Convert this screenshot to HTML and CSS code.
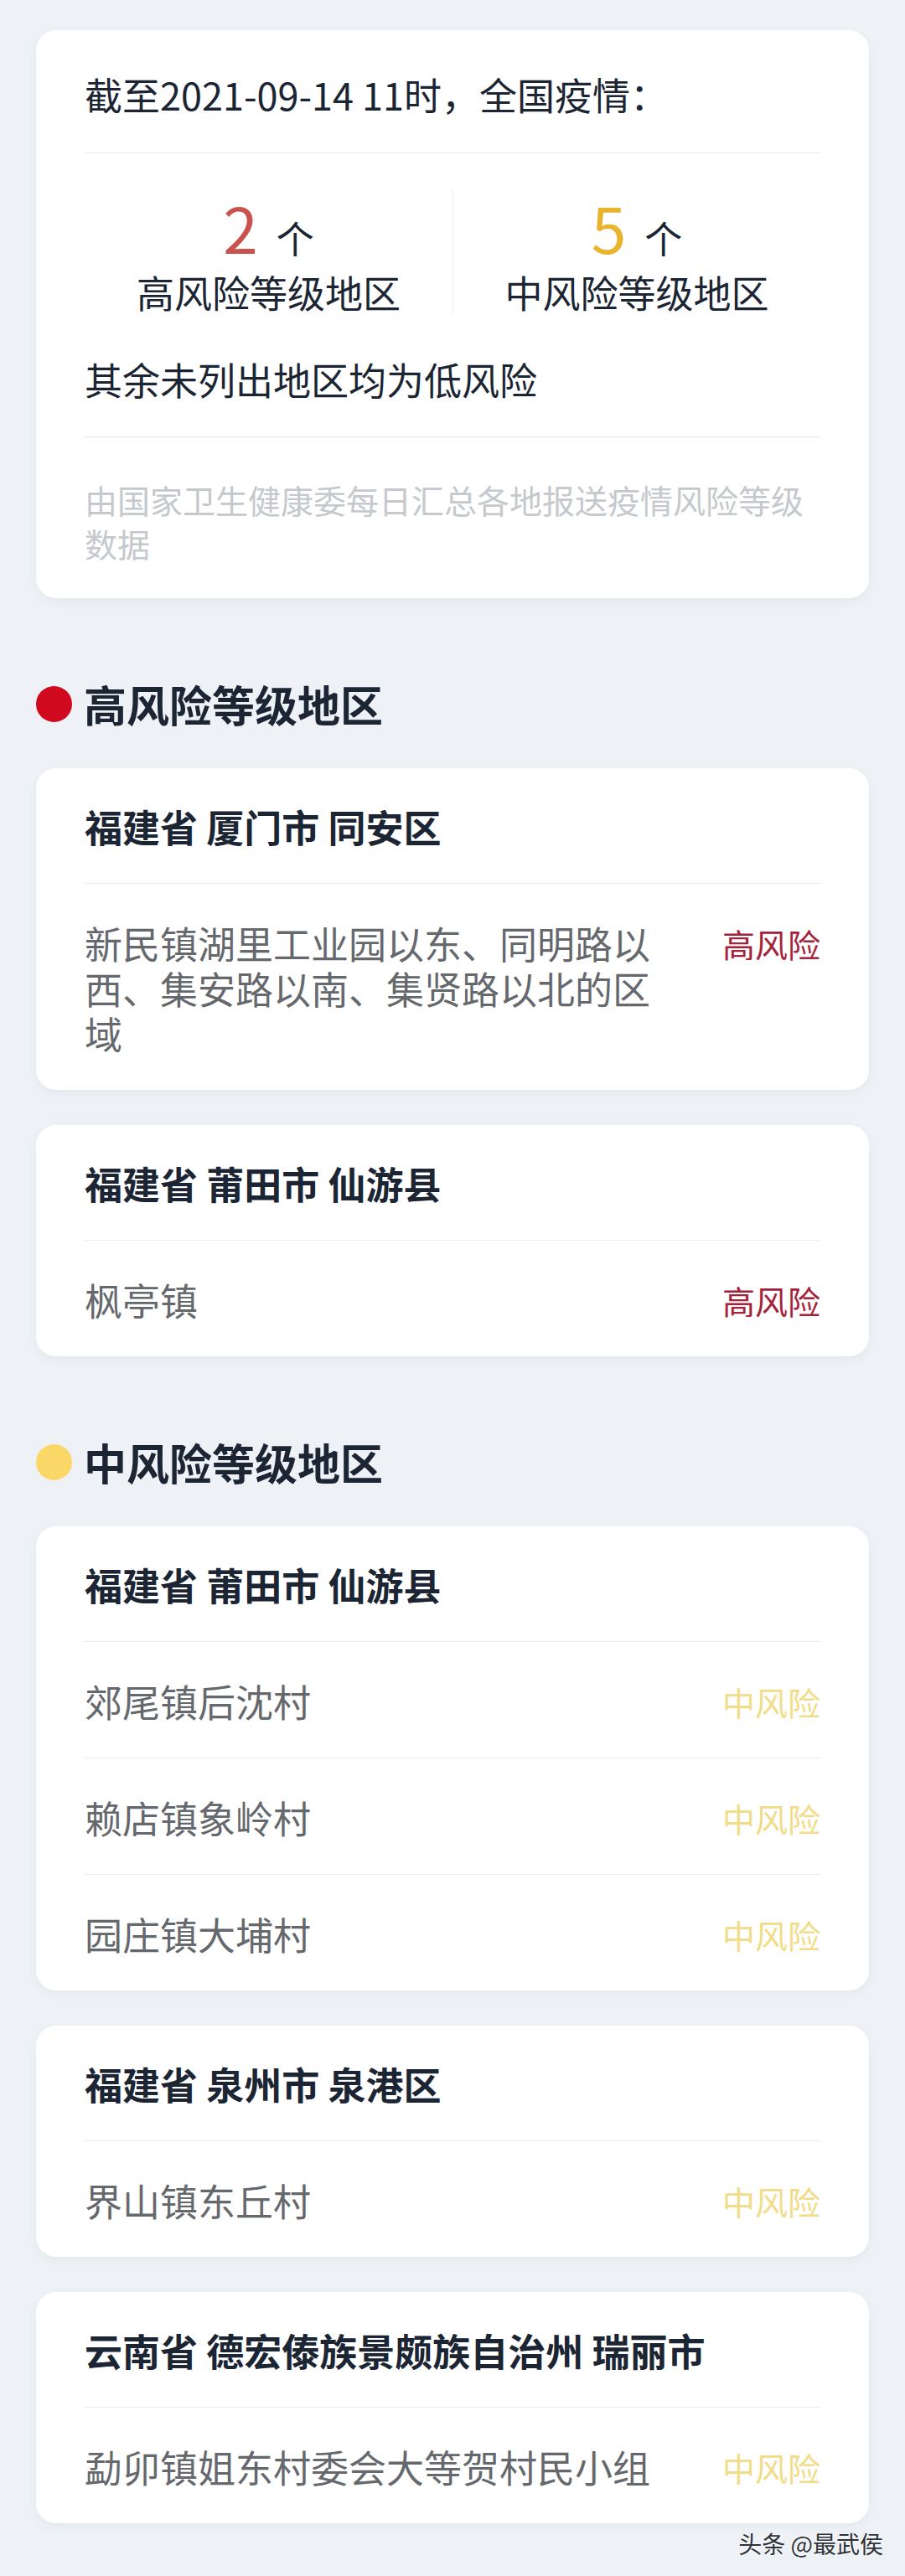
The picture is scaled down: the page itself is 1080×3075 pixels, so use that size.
FILE: index.html
```html
<!DOCTYPE html>
<html lang="zh-CN">
<head>
<meta charset="utf-8">
<title>全国疫情风险等级</title>
<link rel="stylesheet" href="styles.css">
</head>
<body>
<div class="page">
  <section class="card summary">
    <div class="summary-title">截至2021-09-14 11时，全国疫情：</div>
    <div class="stats">
      <div class="stat">
        <div class="stat-num"><span class="num num-high">2</span><span class="unit">个</span></div>
        <div class="stat-label">高风险等级地区</div>
      </div>
      <div class="stat stat-right">
        <div class="stat-num"><span class="num num-mid">5</span><span class="unit">个</span></div>
        <div class="stat-label">中风险等级地区</div>
      </div>
    </div>
    <div class="summary-low">其余未列出地区均为低风险</div>
    <div class="summary-note">由国家卫生健康委每日汇总各地报送疫情风险等级数据</div>
  </section>

  <h2 class="section-title"><span class="dot dot-high"></span>高风险等级地区</h2>

  <section class="card">
    <div class="card-head">福建省 厦门市 同安区</div>
    <div class="row">
      <div class="row-text">新民镇湖里工业园以东、同明路以西、集安路以南、集贤路以北的区域</div>
      <div class="tag tag-high">高风险</div>
    </div>
  </section>

  <section class="card">
    <div class="card-head">福建省 莆田市 仙游县</div>
    <div class="row">
      <div class="row-text">枫亭镇</div>
      <div class="tag tag-high">高风险</div>
    </div>
  </section>

  <h2 class="section-title"><span class="dot dot-mid"></span>中风险等级地区</h2>

  <section class="card">
    <div class="card-head">福建省 莆田市 仙游县</div>
    <div class="row">
      <div class="row-text">郊尾镇后沈村</div>
      <div class="tag tag-mid">中风险</div>
    </div>
    <div class="row">
      <div class="row-text">赖店镇象岭村</div>
      <div class="tag tag-mid">中风险</div>
    </div>
    <div class="row">
      <div class="row-text">园庄镇大埔村</div>
      <div class="tag tag-mid">中风险</div>
    </div>
  </section>

  <section class="card">
    <div class="card-head">福建省 泉州市 泉港区</div>
    <div class="row">
      <div class="row-text">界山镇东丘村</div>
      <div class="tag tag-mid">中风险</div>
    </div>
  </section>

  <section class="card">
    <div class="card-head">云南省 德宏傣族景颇族自治州 瑞丽市</div>
    <div class="row">
      <div class="row-text">勐卯镇姐东村委会大等贺村民小组</div>
      <div class="tag tag-mid">中风险</div>
    </div>
  </section>

  <div class="watermark">头条 @最武侯</div>
</div>
</body>
</html>
```

FILE: styles.css
```css
* {
  box-sizing: border-box;
}

html, body {
  margin: 0;
  padding: 0;
}

body {
  background: #eef2f6;
  font-family: "Noto Sans CJK SC", "Noto Sans", sans-serif;
  color: #1b2533;
}

.page {
  position: relative;
  width: 1080px;
  min-height: 3075px;
  padding: 36px 43px 63px;
  display: flex;
  flex-direction: column;
}

.card {
  background: #ffffff;
  border-radius: 24px;
  padding: 0 58px;
  box-shadow: 0 4px 12px rgba(40, 60, 90, 0.05);
  margin-bottom: 42px;
}

/* summary card */
.summary-title {
  font-size: 45px;
  line-height: 54px;
  padding: 50px 0 42px;
  border-bottom: 1px solid #e8eaed;
  color: #1b2533;
}

.stats {
  display: grid;
  grid-template-columns: 1fr 1fr;
  padding-top: 43px;
}

.stat {
  text-align: center;
}

.stat-right {
  border-left: 1px solid #eceef1;
}

.stat-num {
  font-size: 75px;
  line-height: 90px;
  height: 90px;
}

.num-high {
  color: #c9524f;
}

.num-mid {
  color: #e9b42c;
}

.unit {
  font-size: 45px;
  line-height: 45px;
  color: #1b2533;
  margin-left: 22px;
}

.stat-label {
  font-size: 45px;
  line-height: 54px;
  margin-top: 6px;
  color: #1b2533;
}

.summary-low {
  font-size: 45px;
  line-height: 54px;
  margin-top: 50px;
  padding-bottom: 41px;
  border-bottom: 1px solid #e8eaed;
}

.summary-note {
  font-size: 39px;
  line-height: 52px;
  color: #c5c9cd;
  padding: 48px 0 40px;
}

/* section titles */
.section-title {
  display: flex;
  align-items: center;
  gap: 14px;
  margin: 54px 0 47px;
  font-size: 51px;
  line-height: 60px;
  font-weight: 700;
  color: #1b2533;
}

.dot {
  width: 43px;
  height: 43px;
  border-radius: 50%;
  flex: none;
}

.dot-high {
  background: #d0091e;
}

.dot-mid {
  background: #fbd767;
}

/* region cards */
.card-head {
  font-size: 45px;
  line-height: 54px;
  font-weight: 700;
  padding: 43px 0 40px;
  border-bottom: 1px solid #e9ebee;
  color: #1b2533;
}

.row {
  display: flex;
  justify-content: space-between;
  align-items: flex-start;
  gap: 60px;
  padding: 44px 0 40px;
  border-bottom: 1px solid #e9ebee;
}

.row:last-child {
  border-bottom: none;
}

.row-text {
  flex: 1;
  font-size: 45px;
  line-height: 54px;
  color: #65686d;
}

.tag {
  flex: none;
  font-size: 39px;
  line-height: 54px;
}

.tag-high {
  color: #a5223b;
}

.tag-mid {
  color: #f2dc88;
}

.watermark {
  position: absolute;
  right: 26px;
  top: 3016px;
  font-size: 28px;
  line-height: 40px;
  color: #2e3238;
  text-shadow: 0 0 2px #ffffff;
}
```
